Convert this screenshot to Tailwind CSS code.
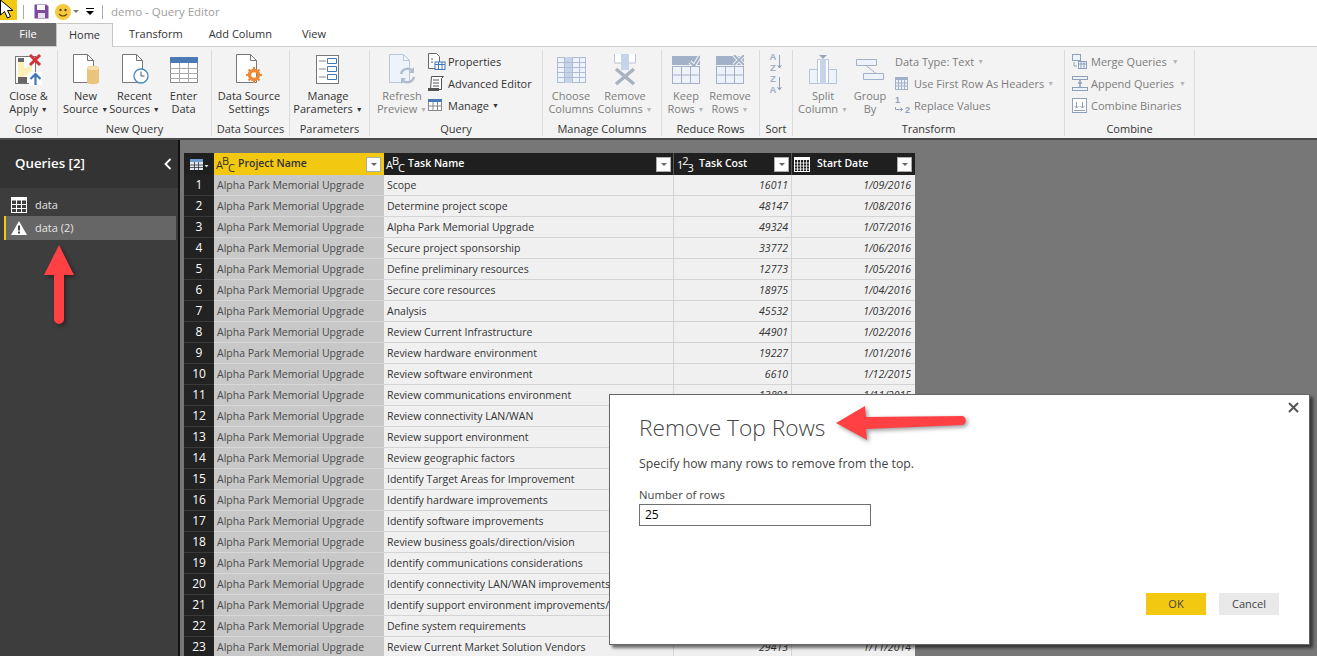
<!DOCTYPE html>
<html lang="en">
<head>
<meta charset="UTF-8">
<title>demo - Query Editor</title>
<script src="https://cdn.jsdelivr.net/npm/@tailwindcss/browser@4"></script>
</head>
<body>
<div class="relative w-[1317px] h-[656px] overflow-hidden bg-white text-[11px] text-[#333] font-['Open_Sans','Liberation_Sans',sans-serif]">

  <!-- title bar -->
  <div class="flex items-center h-[23px]">
    <div class="w-[17px] h-[20px] self-start bg-[#f2c811]"></div>
    <div class="w-px h-[14px] bg-[#aaa] ml-[6px]"></div>
    <svg class="w-[15px] h-[15px] ml-[10px]" viewBox="0 0 15 15"><path d="M.5.5h12l2 2v12H.5z" fill="#7b4a9e"/><rect x="3" y="1" width="8" height="5" fill="#fff"/><rect x="4" y="9" width="7" height="5" fill="#e8e0ee"/></svg>
    <svg class="w-[16px] h-[16px] ml-[6px]" viewBox="0 0 16 16"><circle cx="8" cy="8" r="8" fill="#f7c93e"/><circle cx="5.5" cy="6" r="1.2" fill="#5a4500"/><circle cx="10.5" cy="6" r="1.2" fill="#5a4500"/><path d="M4 10q4 4 8 0" fill="none" stroke="#5a4500" stroke-width="1.1"/></svg>
    <div class="w-0 h-0 ml-[2px] border-x-[3px] border-x-transparent border-t-[3px] border-t-[#777]"></div>
    <div class="flex flex-col items-center ml-[7px] gap-[2px]"><div class="w-[8px] h-px bg-black"></div><div class="w-0 h-0 border-x-[4px] border-x-transparent border-t-[4px] border-t-black"></div></div>
    <div class="w-px h-[14px] bg-[#aaa] ml-[8px]"></div>
    <div class="ml-[8px] text-[11.5px] text-[#a0a0a0]">demo - Query Editor</div>
  </div>

  <!-- tabs -->
  <div class="flex h-[24px] relative z-10 text-[11px]">
    <div class="w-[56px] h-[23px] bg-[#6d6d6d] text-white flex items-center justify-center">File</div>
    <div class="w-[57px] h-[24px] bg-[#f3f3f3] border border-b-0 border-[#c6c6c6] flex items-center justify-center">Home</div>
    <div class="ml-[16px] h-[23px] flex items-center">Transform</div>
    <div class="ml-[26px] h-[23px] flex items-center">Add Column</div>
    <div class="ml-[30px] h-[23px] flex items-center">View</div>
  </div>

  <!-- ribbon -->
  <div class="flex h-[94px] bg-[#f3f3f3] border-t border-[#cfcfcf] border-b-2 border-b-[#4a4a4a] -mt-px leading-[13px] text-center whitespace-nowrap">

    <div class="w-[58px] flex flex-col border-r border-[#dcdcdc] mt-[3px] mb-[2px]">
      <div class="flex-1 flex">
        <div class="w-[57px] flex flex-col items-center">
          <div class="h-[39px] flex items-center">
            <svg class="w-[28px] h-[32px]" viewBox="0 0 28 32"><rect x=".5" y="2.5" width="20" height="27" fill="#fff" stroke="#777"/><rect x="3" y="4" width="6" height="24" fill="#fdf0b8"/><path d="M9 14l8-3v6l-8 6z" fill="#fdf0b8"/><rect x="3" y="4" width="6" height="4" fill="#666"/><rect x="3" y="23" width="9" height="6" fill="#666"/><path d="M15 1l10 10M25 1L15 11" stroke="#d13438" stroke-width="3"/><rect x="14" y="18" width="13" height="13" fill="#fff"/><path d="M20.500 31V20M15.500 25l5-5 5 5" fill="none" stroke="#3f78b5" stroke-width="2.200"/></svg>
          </div>
          <div>Close &amp;<br>Apply <span class="text-[7px] align-[1px]">▼</span></div>
        </div>
      </div>
      <div class="h-[14px]">Close</div>
    </div>

    <div class="w-[154px] flex flex-col border-r border-[#dcdcdc] mt-[3px] mb-[2px]">
      <div class="flex-1 flex justify-center">
        <div class="w-[49px] flex flex-col items-center">
          <div class="h-[39px] flex items-center">
            <svg class="w-[28px] h-[31px]" viewBox="0 0 28 31"><path d="M1.500.5h14l6 6v22h-20z" fill="#fff" stroke="#777"/><path d="M15.500.5v6h6" fill="none" stroke="#777"/><path d="M15 14c0-3 12-3 12 0v14c0 3-12 3-12 0z" fill="#eac47c"/><ellipse cx="21" cy="14" rx="6" ry="2" fill="#f6dfae"/></svg>
          </div>
          <div>New<br>Source <span class="text-[7px] align-[1px]">▼</span></div>
        </div>
        <div class="w-[49px] flex flex-col items-center">
          <div class="h-[39px] flex items-center">
            <svg class="w-[28px] h-[31px]" viewBox="0 0 28 31"><path d="M1.500.5h14l6 6v22h-20z" fill="#fff" stroke="#777"/><path d="M15.500.5v6h6" fill="none" stroke="#777"/><circle cx="20" cy="22" r="7" fill="#fff" stroke="#4a86c0" stroke-width="1.300"/><path d="M20 17.500V22h3.500" fill="none" stroke="#555"/></svg>
          </div>
          <div>Recent<br>Sources <span class="text-[7px] align-[1px]">▼</span></div>
        </div>
        <div class="w-[49px] flex flex-col items-center">
          <div class="h-[39px] flex items-center">
            <svg class="w-[28px] h-[26px]" viewBox="0 0 28 26"><rect x=".5" y=".5" width="27" height="25" fill="#fff" stroke="#8a8a8a"/><rect width="28" height="6" fill="#4a7ab5"/><path d="M0 11.500h28M0 16.500h28M0 21.500h28M9.500 6v20M18.500 6v20" stroke="#a8a8a8"/></svg>
          </div>
          <div>Enter<br>Data</div>
        </div>
      </div>
      <div class="h-[14px]">New Query</div>
    </div>

    <div class="w-[78px] flex flex-col border-r border-[#dcdcdc] mt-[3px] mb-[2px]">
      <div class="flex-1 flex justify-center">
        <div class="flex flex-col items-center pr-[3px]">
          <div class="h-[39px] flex items-center">
            <svg class="w-[28px] h-[31px]" viewBox="0 0 28 31"><path d="M1.500.5h14l6 6v22h-20z" fill="#fff" stroke="#777"/><path d="M15.500.5v6h6" fill="none" stroke="#777"/><circle cx="19" cy="21" r="4.500" fill="none" stroke="#ed8936" stroke-width="3.500"/><path d="M19 13v16M11 21h16M13.500 15.500l11 11M24.500 15.500l-11 11" stroke="#ed8936" stroke-width="2" stroke-dasharray="3 10"/></svg>
          </div>
          <div>Data Source<br>Settings</div>
        </div>
      </div>
      <div class="h-[14px]">Data Sources</div>
    </div>

    <div class="w-[80px] flex flex-col border-r border-[#dcdcdc] mt-[3px] mb-[2px]">
      <div class="flex-1 flex justify-center">
        <div class="flex flex-col items-center pr-[3px]">
          <div class="h-[39px] flex items-center">
            <svg class="w-[24px] h-[29px]" viewBox="0 0 24 29"><rect x=".5" y=".5" width="22" height="28" fill="#fff" stroke="#777"/><path d="M3 6h7M3 14h7M3 22h7" stroke="#888"/><path d="M11.500 3.500h9v5h-9zM11.500 11.500h9v5h-9zM11.500 19.500h9v5h-9z" fill="#fff" stroke="#3f78b5"/></svg>
          </div>
          <div>Manage<br>Parameters <span class="text-[7px] align-[1px]">▼</span></div>
        </div>
      </div>
      <div class="h-[14px]">Parameters</div>
    </div>

    <div class="w-[173px] flex flex-col border-r border-[#dcdcdc] mt-[3px] mb-[2px]">
      <div class="flex-1 flex pl-[6px]">
        <div class="w-[52px] flex flex-col items-center text-[#7d7d7d]">
          <div class="h-[39px] flex items-center">
            <svg class="w-[28px] h-[31px]" viewBox="0 0 28 31"><path d="M1.500.5h14l6 6v22h-20z" fill="#eef3fb" stroke="#b9c6dc"/><path d="M15.500.5v6h6" fill="none" stroke="#b9c6dc"/><path d="M13 20a7 7 0 0 1 12-3M26 23a7 7 0 0 1-12 3" fill="none" stroke="#aebccd" stroke-width="2.500"/><path d="M26 13v6h-5zM13 30v-6h5z" fill="#aebccd"/></svg>
          </div>
          <div>Refresh<br>Preview <span class="text-[7px] align-[1px] text-[#b5b5b5]">▼</span></div>
        </div>
        <div class="flex flex-col text-left">
          <div class="h-[22px] flex items-center"><svg class="w-[18px] h-[17px] mr-[2px]" viewBox="0 0 18 17"><path d="M.5.5h8l3 3v12H.5z" fill="#fff" stroke="#666"/><path d="M3 6h2M3 9h2" stroke="#666"/><rect x="7" y="9" width="10" height="7.500" fill="#fff" stroke="#3f78b5"/><path d="M7 11.500h10M10.500 9v8M14 9v8" stroke="#3f78b5"/></svg>Properties</div>
          <div class="h-[22px] flex items-center"><svg class="w-[18px] h-[17px] mr-[2px]" viewBox="0 0 18 17"><path d="M3.500 1.500h12l-2 2v11h-11z" fill="#fff" stroke="#555"/><path d="M5 5h6M5 8h6M5 11h6" stroke="#555"/><path d="M0 13h11v3H0z" fill="#555"/></svg>Advanced Editor</div>
          <div class="h-[22px] flex items-center"><svg class="w-[14px] h-[12px] mr-[6px]" viewBox="0 0 14 12"><rect x=".5" y=".5" width="13" height="11" fill="#fff" stroke="#888"/><rect width="14" height="3" fill="#4a7ab5"/><path d="M0 7h14M5 3v9M9.500 3v9" stroke="#888"/></svg>Manage <span class="text-[7px] ml-[3px]">▼</span></div>
        </div>
      </div>
      <div class="h-[14px]">Query</div>
    </div>

    <div class="w-[119px] flex flex-col border-r border-[#dcdcdc] mt-[3px] mb-[2px] text-[#7d7d7d]">
      <div class="flex-1 flex pl-[1px]">
        <div class="w-[54px] flex flex-col items-center">
          <div class="h-[39px] flex items-center">
            <svg class="w-[29px] h-[26px]" viewBox="0 0 29 26"><rect x=".5" y=".5" width="28" height="25" fill="#eef3fb" stroke="#aebcd4"/><rect x="8" y="0" width="7.500" height="26" fill="#c5d4e8"/><path d="M0 5.500h29M0 10.500h29M0 15.500h29M0 20.500h29M7.500 0v26M15.500 0v26M22.500 0v26" stroke="#aebcd4"/></svg>
          </div>
          <div>Choose<br>Columns</div>
        </div>
        <div class="w-[54px] flex flex-col items-center">
          <div class="h-[39px] flex items-center">
            <svg class="w-[24px] h-[31px]" viewBox="0 0 24 31"><path d="M1.500 0v9h21V0" fill="#fff" stroke="#b4c4da"/><rect x="8" y="0" width="8" height="16" fill="#c5d4e8"/><path d="M3 15l18 15M21 15L3 30" stroke="#a8b2c0" stroke-width="3.500"/></svg>
          </div>
          <div>Remove<br>Columns <span class="text-[7px] align-[1px] text-[#b5b5b5]">▼</span></div>
        </div>
      </div>
      <div class="h-[14px] text-[#333]">Manage Columns</div>
    </div>

    <div class="w-[98px] flex flex-col border-r border-[#dcdcdc] mt-[3px] mb-[2px] text-[#7d7d7d]">
      <div class="flex-1 flex pl-[2px]">
        <div class="w-[44px] flex flex-col items-center">
          <div class="h-[39px] flex items-center">
            <svg class="w-[28px] h-[29px]" viewBox="0 0 28 29"><rect x="0" y="1" width="28" height="9" fill="#a3b1c8"/><path d="M18 7l4 4 6-10" fill="none" stroke="#f3f3f3" stroke-width="4"/><path d="M18 7l4 4 6-10" fill="none" stroke="#a3b1c8" stroke-width="2"/><rect x=".5" y="11.500" width="27" height="17" fill="#eef3fb" stroke="#a3b1c8"/><path d="M0 20h28M9.500 12v17M18.500 12v17" stroke="#a3b1c8"/></svg>
          </div>
          <div>Keep<br>Rows <span class="text-[7px] align-[1px] text-[#b5b5b5]">▼</span></div>
        </div>
        <div class="w-[44px] flex flex-col items-center">
          <div class="h-[39px] flex items-center">
            <svg class="w-[28px] h-[29px]" viewBox="0 0 28 29"><rect x="0" y="1" width="28" height="9" fill="#a3b1c8"/><path d="M18 0l10 10M28 0L18 10" stroke="#f3f3f3" stroke-width="4"/><path d="M18 0l10 10M28 0L18 10" stroke="#a3b1c8" stroke-width="2"/><rect x=".5" y="11.500" width="27" height="17" fill="#eef3fb" stroke="#a3b1c8"/><path d="M0 20h28M9.500 12v17M18.500 12v17" stroke="#a3b1c8"/></svg>
          </div>
          <div>Remove<br>Rows <span class="text-[7px] align-[1px] text-[#b5b5b5]">▼</span></div>
        </div>
      </div>
      <div class="h-[14px] text-[#333]">Reduce Rows</div>
    </div>

    <div class="w-[33px] flex flex-col border-r border-[#dcdcdc] mt-[3px] mb-[2px]">
      <div class="flex-1 flex flex-col items-center text-[#9fb0c8] font-['Liberation_Sans'] font-bold text-[9.500px] leading-[11px] pt-[1px]">
        <div class="flex items-center gap-[1px] h-[22px]"><div>A<br>Z</div><svg class="w-[5px] h-[14px]" viewBox="0 0 5 14"><path d="M2.500 0v13M.5 10l2 3 2-3" fill="none" stroke="#8fa1ba"/></svg></div>
        <div class="flex items-center gap-[1px] h-[22px]"><div>Z<br>A</div><svg class="w-[5px] h-[14px]" viewBox="0 0 5 14"><path d="M2.500 0v13M.5 10l2 3 2-3" fill="none" stroke="#8fa1ba"/></svg></div>
      </div>
      <div class="h-[14px]">Sort</div>
    </div>

    <div class="w-[272px] flex flex-col border-r border-[#dcdcdc] mt-[3px] mb-[2px] text-[#7d7d7d]">
      <div class="flex-1 flex pl-[6px]">
        <div class="w-[48px] flex flex-col items-center">
          <div class="h-[39px] flex items-center">
            <svg class="w-[28px] h-[29px]" viewBox="0 0 28 29"><path d="M.5 14.500h8v14h-8zM19.500 14.500h8v14h-8z" fill="#eef3fb" stroke="#b4c4da"/><path d="M8.500 4.500h11v24h-11z" fill="#fff" stroke="#b4c4da"/><rect x="11" y="4" width="6" height="25" fill="#c5d4e8"/><path d="M10 0h8l-4 4z" fill="#9aa7ba"/></svg>
          </div>
          <div>Split<br>Column <span class="text-[7px] align-[1px] text-[#b5b5b5]">▼</span></div>
        </div>
        <div class="w-[46px] flex flex-col items-center">
          <div class="h-[39px] flex items-center">
            <svg class="w-[28px] h-[21px]" viewBox="0 0 28 21"><path d="M.5.500h20v6H.5zM7.500 14.500h20v6h-20z" fill="#eef3fb" stroke="#a3b1c8"/><path d="M10 6.500l10 8" stroke="#a3b1c8"/></svg>
          </div>
          <div>Group<br>By</div>
        </div>
        <div class="flex flex-col text-left pl-[2px]">
          <div class="h-[22px] flex items-center">Data Type: Text <span class="text-[7px] ml-[3px] text-[#b5b5b5]">▼</span></div>
          <div class="h-[22px] flex items-center"><svg class="w-[13px] h-[13px] mr-[6px]" viewBox="0 0 13 13"><rect x=".5" y=".5" width="12" height="12" fill="#eef3fb" stroke="#a3b1c8"/><rect y="0" width="13" height="3" fill="#a3b1c8"/><path d="M0 6h13M0 9h13M3.500 3v10M6.500 3v10M9.500 3v10" stroke="#a3b1c8"/></svg>Use First Row As Headers <span class="text-[7px] ml-[3px] text-[#b5b5b5]">▼</span></div>
          <div class="h-[22px] flex items-center">
            <div class="w-[19px] font-['Liberation_Sans'] font-bold text-[9px] leading-[10.500px] text-[#8fa1ba]">
              <div>1</div>
              <div class="flex items-center"><svg class="w-[9px] h-[6px] mr-px" viewBox="0 0 9 6"><path d="M.5 0v2.500h7M5.500.5l2 2-2 2" fill="none" stroke="#8fa1ba"/></svg>2</div>
            </div>Replace Values</div>
        </div>
      </div>
      <div class="h-[14px] text-[#333]">Transform</div>
    </div>

    <div class="w-[130px] flex flex-col border-r border-[#dcdcdc] mt-[3px] mb-[2px] text-[#7d7d7d]">
      <div class="flex-1 flex flex-col text-left pl-[7px]">
        <div class="h-[22px] flex items-center"><svg class="w-[15px] h-[15px] mr-[4px]" viewBox="0 0 15 15"><rect x=".5" y=".5" width="8" height="6" fill="#eef3fb" stroke="#8fa1ba"/><rect x="6.500" y="7.500" width="8" height="7" fill="#eef3fb" stroke="#8fa1ba"/><path d="M6.500 10h8M9 7.500v7M12 7.500v7M2 8v4h3" fill="none" stroke="#8fa1ba"/></svg>Merge Queries <span class="text-[7px] ml-[5px] text-[#b5b5b5]">▼</span></div>
        <div class="h-[22px] flex items-center"><svg class="w-[16px] h-[15px] mr-[3px]" viewBox="0 0 16 15"><rect x=".5" y=".5" width="15" height="3" fill="#eef3fb" stroke="#8fa1ba"/><rect x=".5" y="11.500" width="15" height="3" fill="#eef3fb" stroke="#8fa1ba"/><path d="M8 4v7M6 7h4" stroke="#8fa1ba" stroke-width="1.500"/></svg>Append Queries <span class="text-[7px] ml-[5px] text-[#b5b5b5]">▼</span></div>
        <div class="h-[22px] flex items-center"><svg class="w-[15px] h-[15px] mr-[4px]" viewBox="0 0 15 15"><rect x=".5" y=".5" width="14" height="14" fill="#fff" stroke="#8fa1ba"/><path d="M4.500 4v6M2.500 8l2 2 2-2M10.500 4v6M8.500 8l2 2 2-2M2 12.500h11" fill="none" stroke="#8fa1ba"/></svg>Combine Binaries</div>
      </div>
      <div class="h-[14px] text-[#333]">Combine</div>
    </div>

  </div>

  <!-- body -->
  <div class="flex h-[517px]">
    <div class="w-[180px] shrink-0 bg-[#3d3d3d] border-r-2 border-[#111] text-[#e4e4e4]">
      <div class="h-[48px] bg-[#333] flex items-center justify-between pl-[15px] pr-[6px] text-white text-[13.300px] font-semibold">
        <span>Queries [2]</span>
        <svg class="w-[8px] h-[12px]" viewBox="0 0 8 12"><path d="M6.500 1l-5 5 5 5" fill="none" stroke="#fff" stroke-width="1.800"/></svg>
      </div>
      <div class="pt-[6px] pl-[4px] pr-[2px]">
        <div class="h-[22px] flex items-center pl-[7px]">
          <svg class="w-[16px] h-[16px] mr-[8px]" viewBox="0 0 16 16"><rect x=".5" y=".5" width="15" height="15" fill="none" stroke="#fff"/><rect width="16" height="3.500" fill="#fff"/><path d="M0 7.500h16M0 11.500h16M5.500 3v13M10.500 3v13" stroke="#fff"/></svg>
          data
        </div>
        <div class="h-[24px] flex items-center pl-[5px] bg-[#666] border-l-2 border-[#f2c811]">
          <svg class="w-[16px] h-[14px] mr-[8px]" viewBox="0 0 16 14"><path d="M8 0l8 14H0z" fill="#fff"/><rect x="7" y="4.500" width="2" height="5" fill="#444"/><rect x="7" y="10.500" width="2" height="2" fill="#444"/></svg>
          data (2)
        </div>
      </div>
    </div>

    <div class="flex-1 bg-[#777] pt-[13px] pl-[4px]">
      <div class="w-[731px] bg-[#f0f0f0] text-[10.500px]">
        <div class="flex h-[22px] bg-[#1f1f1f] text-white font-semibold">
          <div class="w-[30px] flex items-center justify-center">
            <svg class="w-[19px] h-[11px]" viewBox="0 0 19 11"><rect width="13" height="11" fill="#dfe7f2"/><rect width="13" height="3" fill="#6e9bd0"/><path d="M0 6h13M0 8.500h13M4.500 3v8M8.500 3v8" stroke="#1f1f1f" stroke-width=".7"/><path d="M14.500 6h4l-2 2.500z" fill="#ddd"/></svg>
          </div>
          <div class="w-[170px] bg-[#f2c811] text-[#333] flex items-center pl-[2px] pr-[3px]">
            <span class="w-[22px] font-normal text-[11px] tracking-[-1px] leading-none">A<span class="relative -top-[4px]">B</span><span class="relative top-[3px]">C</span></span>
            <span class="flex-1">Project Name</span>
            <span class="w-[15px] h-[15px] bg-white border border-[#aaa] flex items-center justify-center"><span class="w-0 h-0 border-x-[3px] border-x-transparent border-t-[3px] border-t-[#666]"></span></span>
          </div>
          <div class="w-[290px] flex items-center pl-[2px] pr-[2px] border-r border-[#555]">
            <span class="w-[22px] font-normal text-[11px] tracking-[-1px] leading-none">A<span class="relative -top-[4px]">B</span><span class="relative top-[3px]">C</span></span>
            <span class="flex-1">Task Name</span>
            <span class="w-[15px] h-[15px] bg-white border border-[#aaa] flex items-center justify-center"><span class="w-0 h-0 border-x-[3px] border-x-transparent border-t-[3px] border-t-[#666]"></span></span>
          </div>
          <div class="w-[118px] flex items-center pl-[3px] pr-[2px] border-r border-[#555]">
            <span class="w-[22px] font-normal text-[11px] tracking-[-1px] leading-none">1<span class="relative -top-[4px]">2</span><span class="relative top-[3px]">3</span></span>
            <span class="flex-1">Task Cost</span>
            <span class="w-[15px] h-[15px] bg-white border border-[#aaa] flex items-center justify-center"><span class="w-0 h-0 border-x-[3px] border-x-transparent border-t-[3px] border-t-[#666]"></span></span>
          </div>
          <div class="w-[123px] flex items-center pl-[2px] pr-[3px]">
            <svg class="w-[16px] h-[15px] mr-[7px]" viewBox="0 0 16 15"><rect x=".5" y=".5" width="15" height="14" fill="none" stroke="#fff"/><rect width="16" height="3" fill="#fff"/><path d="M0 6h16M0 9h16M0 12h16M3.500 3v12M6.500 3v12M9.500 3v12M12.500 3v12" stroke="#fff" stroke-width=".8"/></svg>
            <span class="flex-1">Start Date</span>
            <span class="w-[15px] h-[15px] bg-white border border-[#aaa] flex items-center justify-center"><span class="w-0 h-0 border-x-[3px] border-x-transparent border-t-[3px] border-t-[#666]"></span></span>
          </div>
        </div>
        <div id="rows"></div>
      </div>
    </div>
  </div>

  <!-- dialog -->
  <div class="absolute left-[609px] top-[394px] w-[701px] h-[251px] bg-white border border-[#666] shadow-[3px_3px_3px_rgba(0,0,0,0.55)] flex flex-col pl-[29px] pr-[30px] text-[#444]">
    <svg class="absolute right-[10px] top-[7px] w-[11px] h-[11px]" viewBox="0 0 11 11"><path d="M1 1l9 9M10 1l-9 9" stroke="#555" stroke-width="2"/></svg>
    <div class="text-[22.700px] font-light leading-[32px] mt-[17px]">Remove Top Rows</div>
    <div class="text-[12.300px] leading-[16px] mt-[12px]">Specify how many rows to remove from the top.</div>
    <div class="text-[11.300px] leading-[14px] mt-[16px]">Number of rows</div>
    <div class="w-[232px] h-[22px] border border-[#707070] flex items-center pl-[5px] text-[12px] text-black mt-[2px]">25</div>
    <div class="mt-auto mb-[29px] flex justify-end gap-[13px] text-[11px]">
      <div class="w-[60px] h-[22px] bg-[#f2c811] flex items-center justify-center">OK</div>
      <div class="w-[60px] h-[22px] bg-[#e9e9e9] flex items-center justify-center">Cancel</div>
    </div>
  </div>

  <!-- annotations -->
  <svg class="absolute left-0 top-0 w-[1317px] h-[656px] pointer-events-none drop-shadow-[2px_2px_2px_rgba(0,0,0,0.4)]" viewBox="0 0 1317 656">
    <path d="M59 245l15 30H64v44a5 5 0 0 1-10 0v-44H44z" fill="#ff4144"/>
    <path d="M836 423l29-17 1 11 97-1a5 5 0 0 1 0 9l-97 4 1 11z" fill="#ff4144"/>
  </svg>

  <!-- mouse pointer -->
  <svg class="absolute left-0 top-0 w-[17px] h-[20px]" viewBox="0 0 17 20"><path d="M.5 0v15l4-3.500 3 6.500 3-1.500-3-6h5.500z" fill="#fff" stroke="#000"/></svg>
</div>

<script>
  const tasks = [
    ["Scope", "16011", "1/09/2016"],
    ["Determine project scope", "48147", "1/08/2016"],
    ["Alpha Park Memorial Upgrade", "49324", "1/07/2016"],
    ["Secure project sponsorship", "33772", "1/06/2016"],
    ["Define preliminary resources", "12773", "1/05/2016"],
    ["Secure core resources", "18975", "1/04/2016"],
    ["Analysis", "45532", "1/03/2016"],
    ["Review Current Infrastructure", "44901", "1/02/2016"],
    ["Review hardware environment", "19227", "1/01/2016"],
    ["Review software environment", "6610", "1/12/2015"],
    ["Review communications environment", "13891", "1/11/2015"],
    ["Review connectivity LAN/WAN", "", ""],
    ["Review support environment", "", ""],
    ["Review geographic factors", "", ""],
    ["Identify Target Areas for Improvement", "", ""],
    ["Identify hardware improvements", "", ""],
    ["Identify software improvements", "", ""],
    ["Review business goals/direction/vision", "", ""],
    ["Identify communications considerations", "", ""],
    ["Identify connectivity LAN/WAN improvements", "", ""],
    ["Identify support environment improvements/changes", "", ""],
    ["Define system requirements", "", ""],
    ["Review Current Market Solution Vendors", "29413", "1/11/2014"]
  ];

  document.getElementById("rows").innerHTML = tasks.map((t, i) => `
    <div class="flex h-[21px] leading-[20px]">
      <div class="w-[30px] bg-[#222] text-white text-center border-b border-[#3a3a3a] text-[12px]">${i + 1}</div>
      <div class="w-[170px] bg-[#c8c8c8] pl-[3px] border-b border-[#d8d8d8] text-[#4a4a4a] whitespace-nowrap overflow-hidden">Alpha Park Memorial Upgrade</div>
      <div class="w-[290px] pl-[3px] border-b border-r border-[#d4d4d4] whitespace-nowrap overflow-hidden">${t[0]}</div>
      <div class="w-[118px] pr-[3px] border-b border-r border-[#d4d4d4] italic text-right">${t[1]}</div>
      <div class="w-[123px] pr-[4px] border-b border-[#d4d4d4] italic text-right">${t[2]}</div>
    </div>`).join("");
</script>
</body>
</html>
